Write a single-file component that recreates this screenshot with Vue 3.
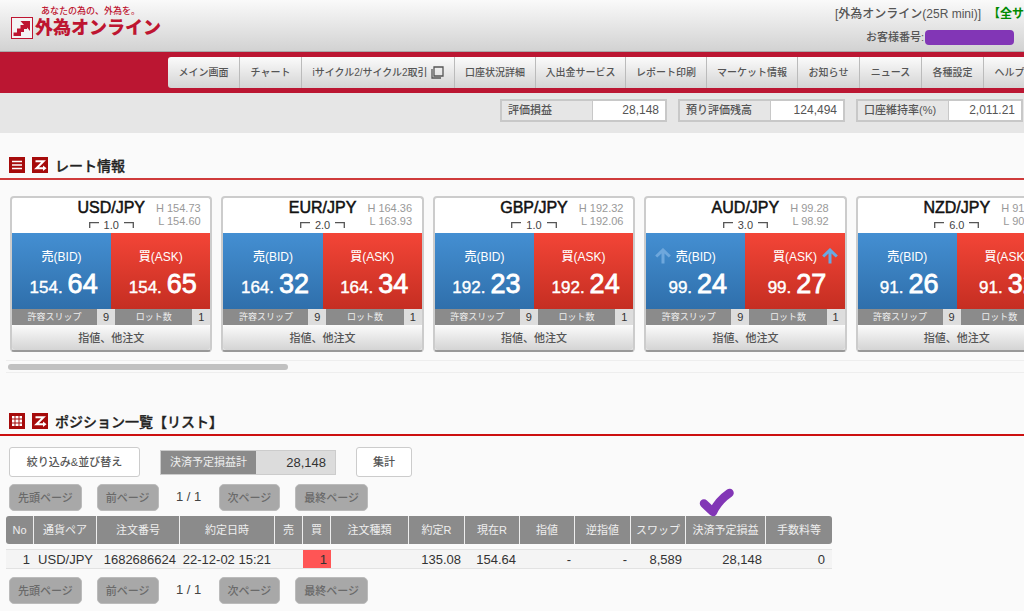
<script setup>
const navItems = [
  { label: 'メイン画面' },
  { label: 'チャート' },
  { label: 'iサイクル2/サイクル2取引', external: true },
  { label: '口座状況詳細' },
  { label: '入出金サービス' },
  { label: 'レポート印刷' },
  { label: 'マーケット情報' },
  { label: 'お知らせ' },
  { label: 'ニュース' },
  { label: '各種設定' },
  { label: 'ヘルプ' },
]

const account = [
  { label: '評価損益', value: '28,148' },
  { label: '預り評価残高', value: '124,494' },
  { label: '口座維持率(%)', value: '2,011.21' },
]

const rates = [
  { pair: 'USD/JPY', spread: '1.0', high: '154.73', low: '154.60', whole: '154.', bid: '64', ask: '65' },
  { pair: 'EUR/JPY', spread: '2.0', high: '164.36', low: '163.93', whole: '164.', bid: '32', ask: '34' },
  { pair: 'GBP/JPY', spread: '1.0', high: '192.32', low: '192.06', whole: '192.', bid: '23', ask: '24' },
  { pair: 'AUD/JPY', spread: '3.0', high: '99.28', low: '98.92', whole: '99.', bid: '24', ask: '27', up: true },
  { pair: 'NZD/JPY', spread: '6.0', high: '91.38', low: '90.92', whole: '91.', bid: '26', ask: '32' },
]

const columns = [
  { label: 'No', width: 28, value: '1' },
  { label: '通貨ペア', width: 63, value: 'USD/JPY' },
  { label: '注文番号', width: 83, value: '1682686624' },
  { label: '約定日時', width: 95, value: '22-12-02 15:21' },
  { label: '売', width: 28, value: '' },
  { label: '買', width: 28, value: '1', buy: true },
  { label: '注文種類', width: 78, value: '' },
  { label: '約定R', width: 56, value: '135.08' },
  { label: '現在R', width: 55, value: '154.64' },
  { label: '指値', width: 55, value: '-' },
  { label: '逆指値', width: 56, value: '-' },
  { label: 'スワップ', width: 55, value: '8,589' },
  { label: '決済予定損益', width: 80, value: '28,148', marked: true },
  { label: '手数料等', width: 66, value: '0' },
]
</script>

<template>
  <div class="page">
    <header class="header">
      <a class="logo" href="#">
        <span class="tagline">あなたの為の、外為を。</span>
        <span class="brand">
          <svg class="mark" viewBox="0 0 22 22" aria-hidden="true">
            <rect x="0.5" y="0.5" width="21" height="21" fill="#f4f4f4" stroke="#be1531" />
            <path d="M2.500 19V15.500H6V11.500H9.500V8H13L9.500 4H19V14L16 10.500V12H13V15H10V19Z" fill="#be1531" />
          </svg>
          <span class="brand-name">外為オンライン</span>
        </span>
      </a>
      <div class="user">
        <div class="user-line"><span>[外為オンライン(25R mini)]</span><a class="notice" href="#">【全サ</a></div>
        <div class="user-line number"><span>お客様番号:</span><span class="mask"></span></div>
      </div>
    </header>

    <nav class="nav">
      <div class="nav-list">
        <a v-for="item in navItems" :key="item.label" class="nav-item" href="#">
          {{ item.label }}
          <svg v-if="item.external" class="window" viewBox="0 0 13 13" aria-hidden="true">
            <path d="M3 1H12V10H3ZM1 3V12H10" fill="none" stroke="#555" stroke-width="1.3" />
          </svg>
        </a>
      </div>
    </nav>

    <div class="account">
      <dl v-for="item in account" :key="item.label" class="account-box">
        <dt>{{ item.label }}</dt>
        <dd>{{ item.value }}</dd>
      </dl>
    </div>

    <main>
      <section class="rates-section">
        <div class="title-bar">
          <button class="icon" aria-label="一覧表示">
            <svg viewBox="0 0 16 16"><path d="M3 4.500H13M3 8H13M3 11.500H13" stroke="#fff" stroke-width="1.7" /></svg>
          </button>
          <button class="icon" aria-label="更新">
            <svg viewBox="0 0 16 16"><path d="M3.500 4.300H11.500L4.500 11.200H12" fill="none" stroke="#fff" stroke-width="2" /><path d="M11 8.500L14.500 11.200L11 14Z" fill="#fff" /></svg>
          </button>
          <h2>レート情報</h2>
        </div>
        <div class="rates">
          <article v-for="(rate, i) in rates" :key="rate.pair" class="card">
            <div class="card-head">
              <div class="pair">{{ rate.pair }}</div>
              <div class="range"><div>H {{ rate.high }}</div><div>L {{ rate.low }}</div></div>
              <div class="spread">
                <svg viewBox="0 0 10 6"><path d="M0.7 6V0.7H10" fill="none" stroke="#555" stroke-width="1.3" /></svg>
                <span>{{ rate.spread }}</span>
                <svg viewBox="0 0 10 6"><path d="M0 0.7H9.3V6" fill="none" stroke="#555" stroke-width="1.3" /></svg>
              </div>
            </div>
            <div class="quotes">
              <button class="quote bid">
                <svg v-if="rate.up" class="arrow" viewBox="0 0 16 16"><path d="M1.200 8.500L8 2L14.800 8.500M8 3V15.500" fill="none" stroke="#6ea7dc" stroke-width="3" /></svg>
                <span class="side">売(BID)</span>
                <span class="price"><span>{{ rate.whole }}</span><span class="pips">{{ rate.bid }}</span></span>
              </button>
              <button class="quote ask">
                <svg v-if="rate.up" class="arrow" viewBox="0 0 16 16"><path d="M1.200 8.500L8 2L14.800 8.500M8 3V15.500" fill="none" stroke="#69a8e2" stroke-width="3" /></svg>
                <span class="side">買(ASK)</span>
                <span class="price"><span>{{ rate.whole }}</span><span class="pips">{{ rate.ask }}</span></span>
              </button>
            </div>
            <div class="settings">
              <label :for="'slip' + i">許容スリップ</label>
              <input :id="'slip' + i" type="text" value="9">
              <label :for="'lot' + i">ロット数</label>
              <input :id="'lot' + i" type="text" value="1">
            </div>
            <button class="order">指値、他注文</button>
          </article>
        </div>
        <div class="scroll-track"><div class="scroll-thumb"></div></div>
      </section>

      <section>
        <div class="title-bar strong">
          <button class="icon" aria-label="表形式">
            <svg viewBox="0 0 16 16">
              <rect x="3" y="3" width="10" height="10" fill="#fff" />
              <path d="M6 3V13M10 3V13M3 6H13M3 10H13" stroke="#a60b0b" stroke-width="1" />
            </svg>
          </button>
          <button class="icon" aria-label="更新">
            <svg viewBox="0 0 16 16"><path d="M3.500 4.300H11.500L4.500 11.200H12" fill="none" stroke="#fff" stroke-width="2" /><path d="M11 8.500L14.500 11.200L11 14Z" fill="#fff" /></svg>
          </button>
          <h2>ポジション一覧【リスト】</h2>
        </div>
        <div class="tools">
          <button class="tool filter">絞り込み&amp;並び替え</button>
          <dl class="total"><dt>決済予定損益計</dt><dd>28,148</dd></dl>
          <button class="tool">集計</button>
        </div>
        <div class="pager">
          <button disabled>先頭ページ</button>
          <button disabled>前ページ</button>
          <span class="count">1 / 1</span>
          <button disabled>次ページ</button>
          <button disabled>最終ページ</button>
        </div>
        <table class="positions">
          <colgroup><col v-for="c in columns" :key="c.label" :style="{ width: c.width + 'px' }"></colgroup>
          <thead>
            <tr>
              <th v-for="c in columns" :key="c.label" scope="col">
                {{ c.label }}
                <svg v-if="c.marked" class="check" viewBox="0 0 36 30" aria-hidden="true">
                  <path d="M5 15.500L14 24Q19 13 30.500 5" fill="none" stroke="#8236b6" stroke-width="8.500" stroke-linecap="round" stroke-linejoin="round" />
                </svg>
              </th>
            </tr>
          </thead>
          <tbody>
            <tr><td v-for="c in columns" :key="c.label" :class="{ buy: c.buy }">{{ c.value }}</td></tr>
          </tbody>
        </table>
        <div class="pager">
          <button disabled>先頭ページ</button>
          <button disabled>前ページ</button>
          <span class="count">1 / 1</span>
          <button disabled>次ページ</button>
          <button disabled>最終ページ</button>
        </div>
      </section>
    </main>
  </div>
</template>

<style>
body {
  background: #fafafa;
}
</style>

<style scoped>
.page {
  overflow: hidden;
  font-family: "Liberation Sans", "Noto Sans CJK JP", sans-serif;
  font-size: 11px;
  font-weight: 500;
  line-height: 16px;
  color: #555;
}
.page *,
.page *::before {
  box-sizing: border-box;
}
button,
input {
  margin: 0;
  padding: 0;
  border: 0;
  font: inherit;
  color: inherit;
}
button {
  white-space: nowrap;
}
a {
  color: inherit;
  text-decoration: none;
}
dl,
dd,
h2 {
  margin: 0;
}
svg {
  display: block;
  flex: none;
}

.header {
  display: flex;
  justify-content: space-between;
  height: 52px;
  background: linear-gradient(#fafafa, #d2d2d2);
  border-bottom: 1px solid #aaa;
}
.logo {
  display: block;
  padding: 5px 0 0 11px;
  color: #be1531;
}
.tagline {
  display: block;
  padding-left: 30px;
  font-size: 9px;
  line-height: 12px;
}
.brand {
  display: flex;
  align-items: center;
  gap: 2px;
}
.mark {
  width: 22px;
  height: 22px;
}
.brand-name {
  font-size: 18px;
  font-weight: 900;
  line-height: 22px;
}
.user {
  padding-top: 6px;
}
.user-line {
  display: flex;
  justify-content: flex-end;
  gap: 7px;
  font-size: 12px;
}
.notice {
  color: #008a00;
  font-weight: 700;
}
.number {
  align-items: center;
  gap: 1px;
  margin-top: 7px;
  padding-right: 10px;
  font-size: 11px;
}
.mask {
  width: 89px;
  height: 15px;
  border-radius: 4px;
  background: #8236b6;
}

.nav {
  padding: 5px 0 5px 168px;
  background: #bb1632;
}
.nav-list {
  display: grid;
  grid-template-columns: 72px 62px 153px 81px 90px 81px 91px 62px 62px 62px 52px;
  width: max-content;
  border-radius: 3px;
  overflow: hidden;
}
.nav-item {
  display: flex;
  align-items: center;
  justify-content: center;
  gap: 3px;
  height: 31px;
  border-right: 1px solid #bbb;
  background: linear-gradient(#fbfbfb, #d4d4d4);
  font-size: 10px;
  white-space: nowrap;
}
.window {
  width: 13px;
  height: 13px;
}

.account {
  display: flex;
  justify-content: flex-end;
  gap: 11px;
  height: 40px;
  padding: 6px 1px 0 0;
  background: #e6e6e6;
}
.account-box {
  display: flex;
  width: 167px;
  height: 23px;
  border: 2px solid #c8c8c8;
  line-height: 19px;
}
.account-box dt {
  width: 91px;
  padding-left: 6px;
  border-right: 1px solid #c8c8c8;
  font-size: 11px;
}
.account-box dd {
  flex: 1;
  padding-right: 6px;
  background: #fff;
  font-size: 12px;
  text-align: right;
}

.title-bar {
  display: flex;
  align-items: center;
  gap: 7px;
  height: 34px;
  padding: 6px 0 0 9px;
  border-bottom: 2px solid #cf3b3b;
}
.title-bar.strong {
  border-bottom-color: #cc1010;
}
.rates-section {
  padding: 13px 0 29px;
}
.icon {
  width: 16px;
  height: 16px;
  background: #a60b0b;
}
.title-bar h2 {
  padding-top: 2px;
  font-size: 14px;
  font-weight: 500;
  line-height: 20px;
  color: #222;
  -webkit-text-stroke: 0.3px;
}

.rates {
  display: grid;
  grid-template-columns: repeat(5, 1fr);
  gap: 9px;
  width: max(1048px, 100%);
  margin: 16px 0 8px 10px;
}
.card {
  border: 2px solid #ccc;
  border-radius: 4px;
  border-bottom-color: #999;
  background: #fff;
}
.card-head {
  display: grid;
  grid-template-columns: 1fr auto 1fr;
  grid-template-rows: 20px 15px;
}
.pair {
  grid-column: 2;
  font-size: 16px;
  line-height: 20px;
  color: #111;
  -webkit-text-stroke: 0.5px;
}
.range {
  grid-column: 3;
  grid-row: 1 / 3;
  justify-self: start;
  padding: 4px 0 0 11px;
  font-size: 11px;
  line-height: 13px;
  text-align: right;
  color: #999;
}
.spread {
  grid-column: 2;
  display: flex;
  justify-content: center;
  gap: 5px;
  line-height: 15px;
  color: #444;
}
.spread svg {
  width: 10px;
  height: 6px;
  margin-top: 4px;
}
.quotes {
  display: grid;
  grid-template-columns: 1fr 1fr;
}
.quote {
  position: relative;
  display: flex;
  flex-direction: column;
  align-items: center;
  height: 76px;
  padding-top: 16px;
  color: #fff;
}
.bid {
  background: linear-gradient(#448fd2, #2f6fab);
}
.ask {
  background: linear-gradient(#f34537, #c52e22);
}
.side {
  font-size: 12px;
}
.price {
  display: flex;
  align-items: baseline;
  gap: 5px;
  padding-left: 4px;
  font-size: 17px;
  line-height: 38px;
  -webkit-text-stroke: 0.4px;
}
.pips {
  font-size: 27px;
  -webkit-text-stroke: 0.8px;
}
.arrow {
  position: absolute;
  top: 15px;
  left: 9px;
  width: 16px;
  height: 16px;
}
.ask .arrow {
  left: auto;
  right: 7px;
}
.settings {
  display: grid;
  grid-template-columns: 85px 18px 1fr 18px;
  height: 16px;
  background: #8b8b8b;
  color: #eee;
  font-size: 9px;
  font-weight: 400;
  text-align: center;
}
.settings input {
  width: 18px;
  height: 16px;
  background: #ddd;
  color: #333;
  font-size: 11px;
  text-align: center;
}
.order {
  display: block;
  width: 100%;
  height: 25px;
  border-radius: 3px;
  background: linear-gradient(#fbfbfb, #d4d4d4);
  color: #555;
}
.scroll-track {
  height: 13px;
  margin-left: 6px;
  padding: 3px 2px;
  border-top: 1px solid #eee;
  border-bottom: 1px solid #eee;
}
.scroll-thumb {
  width: 280px;
  height: 6px;
  border-radius: 3px;
  background: #c1c1c1;
}

.tools {
  display: flex;
  align-items: center;
  padding: 11px 0 0 9px;
  gap: 20px;
}
.tool {
  height: 30px;
  padding: 0 16px;
  border: 1px solid #ccc;
  border-radius: 3px;
  background: #fff;
}
.filter {
  width: 131px;
}
.total {
  display: flex;
  width: 176px;
  height: 25px;
  border: 1px solid #ccc;
  background: #dcdcdc;
  line-height: 23px;
}
.total dt {
  width: 95px;
  background: #8b8b8b;
  color: #eee;
  font-weight: 400;
  text-align: center;
}
.total dd {
  flex: 1;
  padding-right: 9px;
  font-size: 13px;
  text-align: right;
  color: #333;
}

.pager {
  display: flex;
  gap: 15px;
  margin-top: 7px;
  padding-left: 9px;
  line-height: 26px;
}
.pager button {
  height: 27px;
  padding: 0 8px;
  border: 1px solid #bbb;
  border-radius: 5px;
  background: #a8a8a8;
  color: #6a6a6a;
}
.count {
  width: 30px;
  font-size: 13px;
  text-align: center;
  white-space: nowrap;
  color: #444;
}

.positions {
  width: 826px;
  margin-left: 6px;
  table-layout: fixed;
  border-collapse: separate;
  border-spacing: 0 5px;
}
.positions + .pager {
  margin-top: 3px;
}
th {
  position: relative;
  height: 28px;
  padding: 0;
  border-right: 1px solid #eee;
  background: #8b8b8b;
  color: #eee;
  font-size: 11px;
  font-weight: 400;
  white-space: nowrap;
}
th:first-child {
  border-radius: 3px 0 0 3px;
}
th:last-child {
  border-right: 0;
  border-radius: 0 3px 3px 0;
}
td {
  height: 20px;
  padding: 2px 4px 0 0;
  border: solid #e2e2e2;
  border-width: 1px 0;
  background: #f4f4f4;
  color: #333;
  font-size: 13px;
  line-height: 16px;
  text-align: right;
  white-space: nowrap;
}
td:last-child {
  padding-right: 7px;
}
td.buy {
  background: #ff5555;
}
.check {
  position: absolute;
  top: -28px;
  left: 13px;
  width: 36px;
  height: 30px;
}
</style>
